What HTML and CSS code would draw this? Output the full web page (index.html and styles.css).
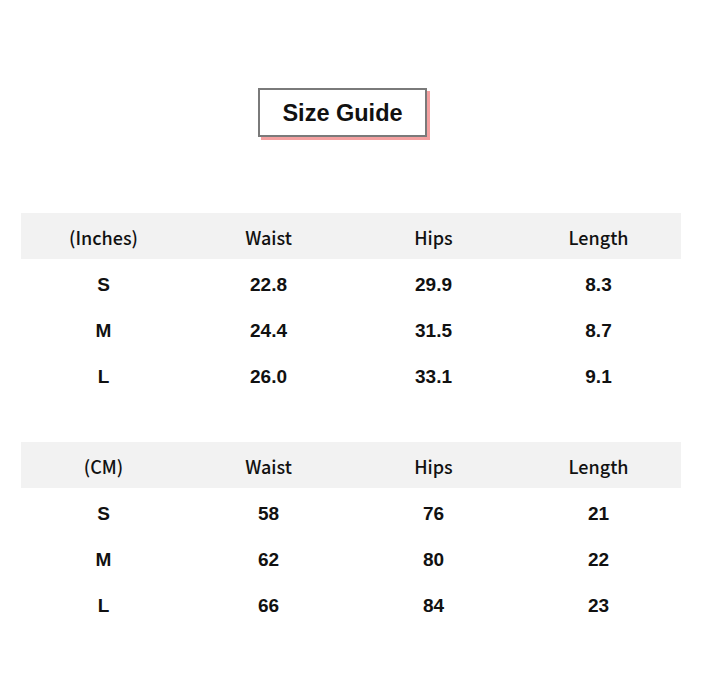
FILE: index.html
```html
<!DOCTYPE html>
<html>
<head>
<meta charset="utf-8">
<link rel="stylesheet" href="styles.css">
</head>
<body>
<div class="page">
  <div class="title-wrap"><div class="title">Size Guide</div></div>
  <table class="size-table">
    <tr class="head"><th>(Inches)</th><th>Waist</th><th>Hips</th><th>Length</th></tr>
    <tr><td>S</td><td>22.8</td><td>29.9</td><td>8.3</td></tr>
    <tr><td>M</td><td>24.4</td><td>31.5</td><td>8.7</td></tr>
    <tr><td>L</td><td>26.0</td><td>33.1</td><td>9.1</td></tr>
  </table>
  <table class="size-table second">
    <tr class="head"><th>(CM)</th><th>Waist</th><th>Hips</th><th>Length</th></tr>
    <tr><td>S</td><td>58</td><td>76</td><td>21</td></tr>
    <tr><td>M</td><td>62</td><td>80</td><td>22</td></tr>
    <tr><td>L</td><td>66</td><td>84</td><td>23</td></tr>
  </table>
</div>
</body>
</html>
```
FILE: styles.css
```css
html, body {
  margin: 0;
  padding: 0;
  background: #fff;
}
.page {
  width: 703px;
  padding: 88px 0 0 21px;
  box-sizing: border-box;
}
.title-wrap {
  width: 660px;
  padding-left: 237px;
  box-sizing: border-box;
}
.title {
  width: 169px;
  height: 49px;
  box-sizing: border-box;
  border: 2px solid #7a7a7a;
  box-shadow: 3px 3px 0 #f4a0a0;
  font-family: "Liberation Sans", Arial, sans-serif;
  font-weight: bold;
  font-size: 23.5px;
  color: #111;
  display: flex;
  align-items: center;
  justify-content: center;
  padding-top: 1px;
}
.size-table {
  width: 660px;
  border-collapse: collapse;
  table-layout: fixed;
  margin-top: 76px;
}
.size-table.second {
  margin-top: 45px;
}
.size-table th, .size-table td {
  height: 46px;
  padding: 2px 0 0;
  box-sizing: border-box;
  text-align: center;
  vertical-align: middle;
  color: #111;
}
.size-table th {
  background: #f2f2f2;
  font-family: "Noto Sans CJK SC", "Noto Sans", sans-serif;
  font-weight: 500;
  font-size: 18px;
}
.size-table td {
  font-family: "Liberation Sans", Arial, sans-serif;
  font-weight: bold;
  font-size: 19px;
  padding-top: 5px;
}
```
